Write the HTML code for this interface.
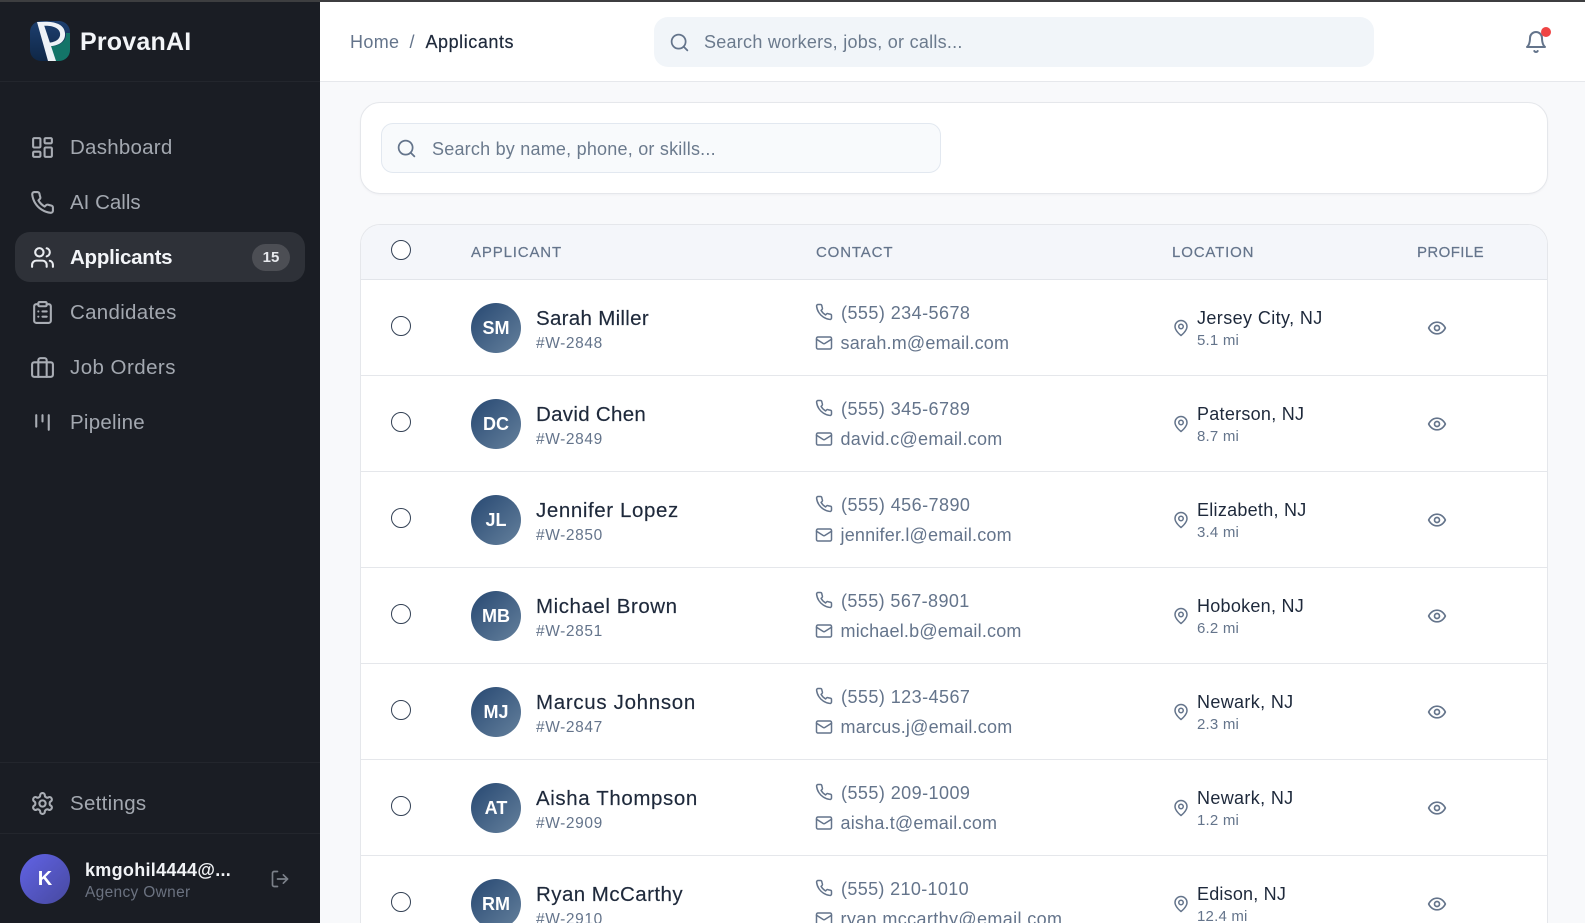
<!DOCTYPE html>
<html lang="en">
<head>
<meta charset="utf-8">
<title>ProvanAI - Applicants</title>
<style>
*{box-sizing:border-box;margin:0;padding:0}
html,body{width:1585px;height:923px;overflow:hidden;background:#f8f9fb;font-family:"Liberation Sans",Arial,sans-serif}
#root{position:relative;width:1585px;height:923px;overflow:hidden;background:#f8f9fb}
.a{position:absolute;white-space:nowrap}
svg.i{position:absolute;fill:none;stroke:currentColor;stroke-width:2;stroke-linecap:round;stroke-linejoin:round}
#side{position:absolute;left:0;top:0;width:320px;height:923px;background:#1a1d24;z-index:5}
.nav{position:absolute;left:70px;font-size:20.5px;line-height:26px;letter-spacing:.25px;color:#a3a8b0;white-space:nowrap}
.nic{color:#a9adb4;left:30px;width:25px;height:25px}
.hl{position:absolute;left:0;width:320px;height:1px;background:#23262d}
.row{position:absolute;left:0;width:1585px;height:96px}
.line{position:absolute;left:361px;width:1186px;top:375px;height:1px;background:#e5e7eb}
.radio{position:absolute;left:391px;width:20px;height:20px;border-radius:50%;border:1.3px solid #334155;background:#fff}
.av{position:absolute;left:471px;top:303px;width:50px;height:50px;border-radius:50%;background:linear-gradient(135deg,#274872,#64809c);color:#fff;font-weight:700;font-size:18px;line-height:50px;text-align:center}
.nm{left:536px;top:306px;font-size:20.5px;line-height:26px;letter-spacing:.3px;color:#1e293b;-webkit-text-stroke:.15px #1e293b}
.id{left:536px;top:334px;font-size:15.5px;line-height:20px;letter-spacing:.6px;color:#64748b}
.ph{left:841px;top:301px;font-size:18px;line-height:24px;letter-spacing:.45px;color:#64748b}
.em{left:840.5px;top:331px;font-size:18px;line-height:24px;letter-spacing:.2px;color:#64748b}
.ci{left:815px;width:18px;height:18px;color:#64748b}
.loc{left:1197px;top:306px;font-size:18px;line-height:24px;letter-spacing:.27px;color:#1e293b}
.mi{left:1197px;top:331px;font-size:15px;line-height:20px;letter-spacing:.2px;color:#64748b}
.pin{left:1172px;top:319px;width:18px;height:18px;color:#64748b}
.eye{left:1427px;top:318px;width:20px;height:20px;color:#64748b}
.th{top:243px;font-size:15px;line-height:20px;letter-spacing:.85px;color:#64748b;-webkit-text-stroke:.2px #64748b}
</style>
</head>
<body>
<div id="root">
<svg width="0" height="0" style="position:absolute">
<defs>
<symbol id="phone" viewBox="0 0 24 24"><path d="M22 16.92v3a2 2 0 0 1-2.18 2 19.79 19.79 0 0 1-8.63-3.07 19.5 19.5 0 0 1-6-6 19.79 19.79 0 0 1-3.07-8.67A2 2 0 0 1 4.11 2h3a2 2 0 0 1 2 1.72 12.84 12.84 0 0 0 .7 2.81 2 2 0 0 1-.45 2.11L8.09 9.91a16 16 0 0 0 6 6l1.27-1.27a2 2 0 0 1 2.11-.45 12.84 12.84 0 0 0 2.81.7A2 2 0 0 1 22 16.92z"/></symbol>
<symbol id="mail" viewBox="0 0 24 24"><rect x="2" y="4" width="20" height="16" rx="2"/><path d="m22 7-8.97 5.7a1.94 1.94 0 0 1-2.06 0L2 7"/></symbol>
<symbol id="pin" viewBox="0 0 24 24"><path d="M20 10c0 6-8 12-8 12s-8-6-8-12a8 8 0 0 1 16 0Z"/><circle cx="12" cy="10" r="3"/></symbol>
<symbol id="eye" viewBox="0 0 24 24"><path d="M2 12s3-7 10-7 10 7 10 7-3 7-10 7-10-7-10-7Z"/><circle cx="12" cy="12" r="3"/></symbol>
<symbol id="search" viewBox="0 0 24 24"><circle cx="11" cy="11" r="8"/><path d="m21 21-4.3-4.3"/></symbol>
</defs>
</svg>

<div class="a" style="left:0;top:0;width:1585px;height:2px;background:#3d3e40;z-index:9"></div>

<div id="side">
  <svg class="a" style="left:30px;top:21px" width="40" height="40" viewBox="0 0 40 40">
    <defs>
      <linearGradient id="lg" x1="0" y1="0" x2="0" y2="1"><stop offset="0" stop-color="#1d3f6e"/><stop offset="1" stop-color="#0f2747"/></linearGradient>
      <clipPath id="lc"><rect width="40" height="40" rx="11"/></clipPath>
    </defs>
    <g clip-path="url(#lc)">
      <rect width="40" height="40" fill="url(#lg)"/>
      <path d="M21 40 L18 25 C28 26 37 21 36 12 L40 12 L40 40Z" fill="#137468"/>
      <path d="M7 1 L13 1 L26 40 L18 40Z" fill="#eef2f6"/>
      <path d="M9 1 C20 0 34 1 35 12 C36 22 26 26 16 25 L15 22 C24 22 31 19 30 12 C29 6 20 4 12 5Z" fill="#eef2f6"/>
    </g>
  </svg>
  <div class="a" style="left:80px;top:27px;font-size:25px;line-height:30px;font-weight:700;color:#f3f5f8;letter-spacing:.2px">ProvanAI</div>
  <div class="hl" style="top:81px"></div>

  <div class="a" style="left:15px;top:232px;width:290px;height:50px;border-radius:15px;background:#2e3138"></div>

  <svg class="i nic" style="top:135px" viewBox="0 0 24 24"><rect x="3" y="3" width="7" height="9" rx="1"/><rect x="14" y="3" width="7" height="5" rx="1"/><rect x="14" y="12" width="7" height="9" rx="1"/><rect x="3" y="16" width="7" height="5" rx="1"/></svg>
  <div class="nav" style="top:135px">Dashboard</div>

  <svg class="i nic" style="top:190px" viewBox="0 0 24 24"><use href="#phone"/></svg>
  <div class="nav" style="top:190px;letter-spacing:0">AI Calls</div>

  <svg class="i nic" style="top:245px;color:#e8ebef" viewBox="0 0 24 24"><path d="M16 21v-2a4 4 0 0 0-4-4H6a4 4 0 0 0-4 4v2"/><circle cx="9" cy="7" r="4"/><path d="M22 21v-2a4 4 0 0 0-3-3.87"/><path d="M16 3.13a4 4 0 0 1 0 7.75"/></svg>
  <div class="nav" style="top:245px;color:#f3f5f8;font-weight:700;letter-spacing:-.25px">Applicants</div>
  <div class="a" style="left:252px;top:244px;width:38px;height:27px;border-radius:14px;background:#4c4e54;color:#e8eaee;font-size:15px;font-weight:700;line-height:27px;text-align:center">15</div>

  <svg class="i nic" style="top:300px" viewBox="0 0 24 24"><rect x="8" y="2" width="8" height="4" rx="1"/><path d="M16 4h2a2 2 0 0 1 2 2v14a2 2 0 0 1-2 2H6a2 2 0 0 1-2-2V6a2 2 0 0 1 2-2h2"/><path d="M12 11h4"/><path d="M12 16h4"/><path d="M8 11h.01"/><path d="M8 16h.01"/></svg>
  <div class="nav" style="top:300px;letter-spacing:.3px">Candidates</div>

  <svg class="i nic" style="top:355px" viewBox="0 0 24 24"><path d="M16 21V5a2 2 0 0 0-2-2h-4a2 2 0 0 0-2 2v16"/><rect x="2" y="7" width="20" height="14" rx="2"/></svg>
  <div class="nav" style="top:355px;letter-spacing:.45px">Job Orders</div>

  <svg class="i nic" style="top:410px" viewBox="0 0 24 24"><path d="M6 5v11"/><path d="M12 5v6"/><path d="M18 5v14"/></svg>
  <div class="nav" style="top:410px;letter-spacing:.25px">Pipeline</div>

  <div class="hl" style="top:762px"></div>
  <svg class="i nic" style="top:791px" viewBox="0 0 24 24"><path d="M12.22 2h-.44a2 2 0 0 0-2 2v.18a2 2 0 0 1-1 1.73l-.43.25a2 2 0 0 1-2 0l-.15-.08a2 2 0 0 0-2.73.73l-.22.38a2 2 0 0 0 .73 2.73l.15.1a2 2 0 0 1 1 1.72v.51a2 2 0 0 1-1 1.74l-.15.09a2 2 0 0 0-.73 2.73l.22.38a2 2 0 0 0 2.73.73l.15-.08a2 2 0 0 1 2 0l.43.25a2 2 0 0 1 1 1.73V20a2 2 0 0 0 2 2h.44a2 2 0 0 0 2-2v-.18a2 2 0 0 1 1-1.73l.43-.25a2 2 0 0 1 2 0l.15.08a2 2 0 0 0 2.73-.73l.22-.39a2 2 0 0 0-.73-2.73l-.15-.08a2 2 0 0 1-1-1.74v-.5a2 2 0 0 1 1-1.74l.15-.09a2 2 0 0 0 .73-2.73l-.22-.38a2 2 0 0 0-2.73-.73l-.15.08a2 2 0 0 1-2 0l-.43-.25a2 2 0 0 1-1-1.73V4a2 2 0 0 0-2-2z"/><circle cx="12" cy="12" r="3"/></svg>
  <div class="nav" style="top:791px;letter-spacing:.3px">Settings</div>
  <div class="hl" style="top:833px"></div>

  <div class="a" style="left:20px;top:854px;width:50px;height:50px;border-radius:50%;background:linear-gradient(135deg,#6163e6,#47499f);color:#fff;font-size:20px;font-weight:700;line-height:50px;text-align:center">K</div>
  <div class="a" style="left:85px;top:859px;font-size:18px;line-height:22px;font-weight:700;color:#f1f3f6;letter-spacing:.3px">kmgohil4444@...</div>
  <div class="a" style="left:85px;top:883px;font-size:15.5px;line-height:20px;color:#6b7280;letter-spacing:.32px">Agency Owner</div>
  <svg class="i" style="left:270px;top:869px;width:20px;height:20px;color:#7b8089" viewBox="0 0 24 24"><path d="M9 21H5a2 2 0 0 1-2-2V5a2 2 0 0 1 2-2h4"/><path d="m16 17 5-5-5-5"/><path d="M21 12H9"/></svg>
</div>

<!-- top header -->
<div class="a" style="left:320px;top:0;width:1265px;height:82px;background:#fff;border-bottom:1px solid #e6e8ec"></div>
<div class="a" style="left:350px;top:30px;font-size:18px;line-height:24px;color:#64748b;letter-spacing:.35px">Home</div>
<div class="a" style="left:409.5px;top:30px;font-size:18px;line-height:24px;color:#64748b">/</div>
<div class="a" style="left:425.5px;top:30px;font-size:18px;line-height:24px;color:#1e293b;letter-spacing:.55px;-webkit-text-stroke:.2px #1e293b">Applicants</div>
<div class="a" style="left:654px;top:17px;width:720px;height:50px;border-radius:14px;background:#f1f5f9"></div>
<svg class="i" style="left:669px;top:32px;width:21px;height:21px;color:#64748b" viewBox="0 0 24 24"><use href="#search"/></svg>
<div class="a" style="left:704px;top:30px;font-size:18px;line-height:24px;color:#6b7a8d;letter-spacing:.26px">Search workers, jobs, or calls...</div>
<svg class="i" style="left:1523.5px;top:30px;width:24px;height:24px;color:#64748b" viewBox="0 0 24 24"><path d="M6 8a6 6 0 0 1 12 0c0 7 3 9 3 9H3s3-2 3-9"/><path d="M10.3 21a1.94 1.94 0 0 0 3.4 0"/></svg>
<div class="a" style="left:1541px;top:27px;width:10px;height:10px;border-radius:50%;background:#ef4444"></div>

<!-- filter card -->
<div class="a" style="left:360px;top:102px;width:1188px;height:92px;border-radius:20px;background:#fff;border:1px solid #e5e7eb;box-shadow:0 1px 2px rgba(15,23,42,.04)"></div>
<div class="a" style="left:381px;top:123px;width:560px;height:50px;border-radius:12px;background:#f8fafc;border:1px solid #e2e8f0"></div>
<svg class="i" style="left:396px;top:138px;width:21px;height:21px;color:#64748b" viewBox="0 0 24 24"><use href="#search"/></svg>
<div class="a" style="left:432px;top:137px;font-size:18px;line-height:24px;color:#6b7a8d;letter-spacing:.22px">Search by name, phone, or skills...</div>

<!-- table card -->
<div class="a" style="left:360px;top:224px;width:1188px;height:699px;border-radius:20px 20px 0 0;background:#fff;border:1px solid #e5e7eb;border-bottom:0"></div>
<div class="a" style="left:361px;top:225px;width:1186px;height:55px;border-radius:19px 19px 0 0;background:#f4f6fa;border-bottom:1px solid #e2e5ea"></div>
<div class="radio" style="top:240px"></div>
<div class="a th" style="left:471px">APPLICANT</div>
<div class="a th" style="left:816px">CONTACT</div>
<div class="a th" style="left:1172px">LOCATION</div>
<div class="a th" style="left:1417px;letter-spacing:.4px">PROFILE</div>

<div class="row" style="top:0">
  <div class="radio" style="top:316px"></div><div class="av">SM</div>
  <div class="a nm">Sarah Miller</div><div class="a id">#W-2848</div>
  <svg class="i ci" style="top:303px"><use href="#phone"/></svg><div class="a ph">(555) 234-5678</div>
  <svg class="i ci" style="top:334px"><use href="#mail"/></svg><div class="a em">sarah.m@email.com</div>
  <svg class="i pin"><use href="#pin"/></svg><div class="a loc" style="letter-spacing:.4px">Jersey City, NJ</div><div class="a mi">5.1 mi</div>
  <svg class="i eye"><use href="#eye"/></svg><div class="line"></div>
</div>
<div class="row" style="top:96px">
  <div class="radio" style="top:316px"></div><div class="av">DC</div>
  <div class="a nm">David Chen</div><div class="a id">#W-2849</div>
  <svg class="i ci" style="top:303px"><use href="#phone"/></svg><div class="a ph">(555) 345-6789</div>
  <svg class="i ci" style="top:334px"><use href="#mail"/></svg><div class="a em" style="letter-spacing:.28px">david.c@email.com</div>
  <svg class="i pin"><use href="#pin"/></svg><div class="a loc">Paterson, NJ</div><div class="a mi">8.7 mi</div>
  <svg class="i eye"><use href="#eye"/></svg><div class="line"></div>
</div>
<div class="row" style="top:192px">
  <div class="radio" style="top:316px"></div><div class="av">JL</div>
  <div class="a nm" style="letter-spacing:.6px">Jennifer Lopez</div><div class="a id">#W-2850</div>
  <svg class="i ci" style="top:303px"><use href="#phone"/></svg><div class="a ph">(555) 456-7890</div>
  <svg class="i ci" style="top:334px"><use href="#mail"/></svg><div class="a em">jennifer.l@email.com</div>
  <svg class="i pin"><use href="#pin"/></svg><div class="a loc">Elizabeth, NJ</div><div class="a mi">3.4 mi</div>
  <svg class="i eye"><use href="#eye"/></svg><div class="line"></div>
</div>
<div class="row" style="top:288px">
  <div class="radio" style="top:316px"></div><div class="av">MB</div>
  <div class="a nm" style="letter-spacing:.55px">Michael Brown</div><div class="a id">#W-2851</div>
  <svg class="i ci" style="top:303px"><use href="#phone"/></svg><div class="a ph" style="letter-spacing:.4px">(555) 567-8901</div>
  <svg class="i ci" style="top:334px"><use href="#mail"/></svg><div class="a em">michael.b@email.com</div>
  <svg class="i pin"><use href="#pin"/></svg><div class="a loc">Hoboken, NJ</div><div class="a mi">6.2 mi</div>
  <svg class="i eye"><use href="#eye"/></svg><div class="line"></div>
</div>
<div class="row" style="top:384px">
  <div class="radio" style="top:316px"></div><div class="av">MJ</div>
  <div class="a nm" style="letter-spacing:.68px">Marcus Johnson</div><div class="a id">#W-2847</div>
  <svg class="i ci" style="top:303px"><use href="#phone"/></svg><div class="a ph">(555) 123-4567</div>
  <svg class="i ci" style="top:334px"><use href="#mail"/></svg><div class="a em">marcus.j@email.com</div>
  <svg class="i pin"><use href="#pin"/></svg><div class="a loc" style="letter-spacing:.35px">Newark, NJ</div><div class="a mi">2.3 mi</div>
  <svg class="i eye"><use href="#eye"/></svg><div class="line"></div>
</div>
<div class="row" style="top:480px">
  <div class="radio" style="top:316px"></div><div class="av">AT</div>
  <div class="a nm" style="letter-spacing:.6px">Aisha Thompson</div><div class="a id">#W-2909</div>
  <svg class="i ci" style="top:303px"><use href="#phone"/></svg><div class="a ph">(555) 209-1009</div>
  <svg class="i ci" style="top:334px"><use href="#mail"/></svg><div class="a em">aisha.t@email.com</div>
  <svg class="i pin"><use href="#pin"/></svg><div class="a loc" style="letter-spacing:.35px">Newark, NJ</div><div class="a mi">1.2 mi</div>
  <svg class="i eye"><use href="#eye"/></svg><div class="line"></div>
</div>
<div class="row" style="top:576px">
  <div class="radio" style="top:316px"></div><div class="av">RM</div>
  <div class="a nm" style="letter-spacing:.45px">Ryan McCarthy</div><div class="a id">#W-2910</div>
  <svg class="i ci" style="top:303px"><use href="#phone"/></svg><div class="a ph" style="letter-spacing:.35px">(555) 210-1010</div>
  <svg class="i ci" style="top:334px"><use href="#mail"/></svg><div class="a em" style="letter-spacing:.37px">ryan.mccarthy@email.com</div>
  <svg class="i pin"><use href="#pin"/></svg><div class="a loc" style="letter-spacing:.2px">Edison, NJ</div><div class="a mi">12.4 mi</div>
  <svg class="i eye"><use href="#eye"/></svg>
</div>
</div>
</body>
</html>
